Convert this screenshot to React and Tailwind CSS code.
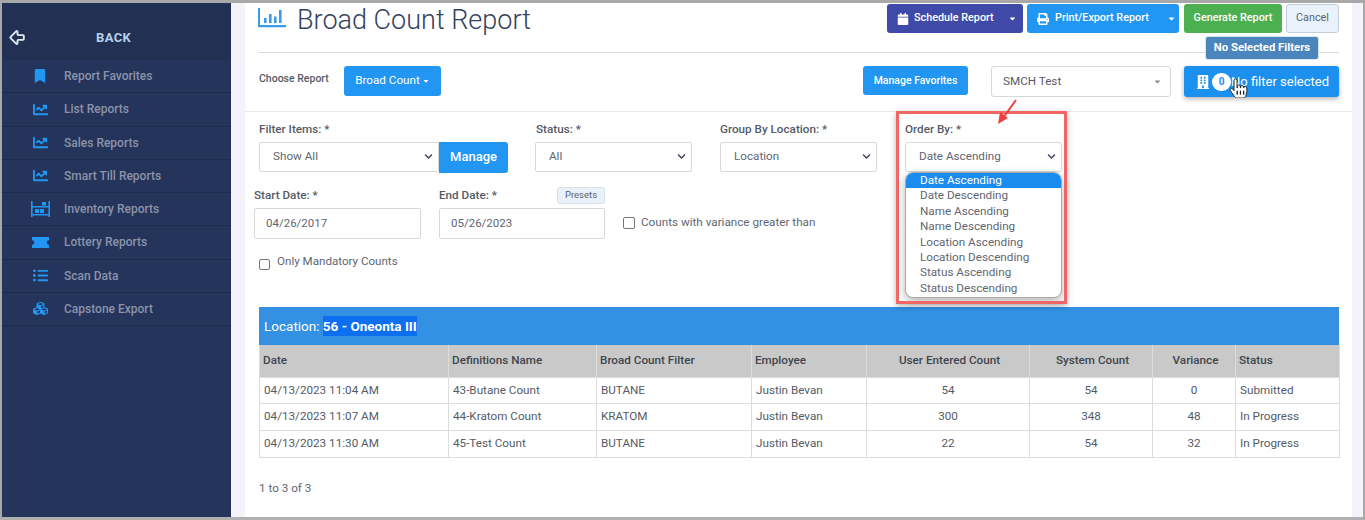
import React from "react";
import { FaBookmark, FaChartLine, FaListUl, FaCubes, FaCalendar, FaPrint, FaBuilding, FaHandPointer, FaCaretDown, FaChevronDown } from "react-icons/fa";
import { ArrowBigLeft } from "lucide-react";

const InventoryIcon = () => (
  <svg width="19" height="16" viewBox="0 0 19 16" fill="currentColor">
    <path d="M0 0h1.6v16H0zM17.4 0H19v16h-1.6zM1 13h17v1.6H1zM1 5h17v1.6H1zM4 8h4v4H4zM9 8h4v4H9zM11 1h4v3.5h-4z" />
  </svg>
);

const TicketIcon = () => (
  <svg width="17" height="11" viewBox="0 0 17 11" fill="currentColor">
    <path d="M0 0h17v3.2a2.3 2.3 0 0 0 0 4.6V11H0V7.8a2.3 2.3 0 0 0 0-4.6z" />
  </svg>
);

const TitleIcon = () => (
  <svg width="28" height="20" viewBox="0 0 28 20" fill="#3a9bea">
    <path d="M0 0h2v17h26v2.2H0zM6 10h2.6v5H6zM11 6h2.6v9H11zM16 8.500h2.600V15H16zM21 2h2.600v13H21z" />
  </svg>
);

const menu = [
  { label: "Report Favorites", icon: <FaBookmark size={14} /> },
  { label: "List Reports", icon: <FaChartLine size={15} /> },
  { label: "Sales Reports", icon: <FaChartLine size={15} /> },
  { label: "Smart Till Reports", icon: <FaChartLine size={15} /> },
  { label: "Inventory Reports", icon: <InventoryIcon /> },
  { label: "Lottery Reports", icon: <TicketIcon /> },
  { label: "Scan Data", icon: <FaListUl size={15} /> },
  { label: "Capstone Export", icon: <FaCubes size={15} /> },
];

const orderOptions = ["Date Ascending", "Date Descending", "Name Ascending", "Name Descending", "Location Ascending", "Location Descending", "Status Ascending", "Status Descending"];

const rows = [
  ["04/13/2023 11:04 AM", "43-Butane Count", "BUTANE", "Justin Bevan", "54", "54", "0", "Submitted"],
  ["04/13/2023 11:07 AM", "44-Kratom Count", "KRATOM", "Justin Bevan", "300", "348", "48", "In Progress"],
  ["04/13/2023 11:30 AM", "45-Test Count", "BUTANE", "Justin Bevan", "22", "54", "32", "In Progress"],
];

const heads = ["Date", "Definitions Name", "Broad Count Filter", "Employee", "User Entered Count", "System Count", "Variance", "Status"];

const Sidebar = () => (
  <aside className="w-[229px] shrink-0 bg-[#25345a]">
    <div className="h-[14px] bg-[#223054]" />
    <div className="flex h-[43px] items-center bg-[#223054] pb-[2px] pl-[6px]">
      <ArrowBigLeft size={19} className="text-[#dfe7f2]" strokeWidth={2.4} />
      <span className="ml-[69px] text-[13px] font-bold tracking-[0.4px] text-[#b5d0ec]">BACK</span>
    </div>
    {menu.map((item) => (
      <div key={item.label} className="flex h-[33.25px] items-center border-b border-[#1d2b4d]">
        <div className="flex w-[62px] justify-end pr-[14px] text-[#2196f3]">
          <span className="flex w-[20px] justify-center">{item.icon}</span>
        </div>
        <span className="text-[12px] font-medium text-[#8a93ab]">{item.label}</span>
      </div>
    ))}
  </aside>
);

const Select = ({ value, className }) => (
  <div className={"flex h-[30px] items-center justify-between rounded-[2px] border border-[#d8d8d8] bg-white pl-[13px] pr-[5px] text-[11.700px] text-[#5f6672] " + className}>
    <span>{value}</span>
    <FaChevronDown size={9} className="text-[#3c4658]" />
  </div>
);

const Label = ({ children, className }) => (
  <div className={"text-[11.700px] font-medium text-[#555b66] " + className}>{children}</div>
);

const TopButtons = () => (
  <div className="flex gap-[4px] pt-px text-[10.800px] font-medium text-white">
    <div className="flex h-[29px] w-[136px] items-center rounded-[3px] bg-[#3f49a8] pl-[10px]">
      <FaCalendar size={12} />
      <span className="ml-[5px]">Schedule Report</span>
      <FaCaretDown size={9} className="ml-[14px]" />
    </div>
    <div className="flex h-[29px] w-[152px] items-center rounded-[3px] bg-[#2196f3] pl-[10px]">
      <FaPrint size={12} />
      <span className="ml-[6px]">Print/Export Report</span>
      <FaCaretDown size={9} className="ml-[18px]" />
    </div>
    <div className="ml-[1px] flex h-[29px] w-[98px] items-center justify-center rounded-[3px] bg-[#4caf50]">Generate Report</div>
    <div className="flex h-[29px] w-[53px] items-center justify-center rounded-[3px] border border-[#c5ced8] bg-[#e9f2fa] font-normal text-[#5a6470]">Cancel</div>
  </div>
);

const ChooseRow = () => (
  <div className="flex h-[59px] items-start border-b border-[#e8e8ee] pl-[14px] pr-[13px] pt-[13px]">
    <span className="mt-[5px] w-[85px] text-[10.500px] font-medium text-[#555b66]">Choose Report</span>
    <div className="flex h-[30px] w-[97px] items-center justify-center gap-[2px] rounded-[3px] bg-[#2196f3] text-[11.700px] text-white">
      Broad Count
      <FaCaretDown size={8} />
    </div>
    <div className="ml-[422px] flex h-[29px] w-[105px] items-center justify-center rounded-[3px] bg-[#2196f3] text-[10.500px] font-medium text-white">Manage Favorites</div>
    <div className="ml-[23px] flex h-[31px] w-[180px] items-center justify-between rounded-[3px] border border-[#d8d8d8] pl-[11px] pr-[8px] text-[11.700px] text-[#555b66]">
      SMCH Test
      <FaCaretDown size={9} className="text-[#888]" />
    </div>
    <div className="relative ml-[13px] flex h-[31px] w-[155px] items-center rounded-[3px] bg-[#1b90ee] pl-[12px] text-[13px] text-white shadow-[0_2px_5px_rgba(0,0,0,0.3)]">
      <FaBuilding size={14} />
      <span className="ml-[2px] flex h-[18px] w-[19px] items-center justify-center rounded-full bg-white text-[10px] font-bold text-[#1b90ee]">0</span>
      <span>No filter selected</span>
      <FaHandPointer size={19} stroke="#111" strokeWidth={22} className="absolute left-[45px] top-[13px] text-white" />
      <div className="absolute -top-[29px] left-[22px] flex h-[22px] w-[112px] items-center justify-center rounded-[2px] bg-[#4a86bd] text-[11.300px] font-bold text-white shadow-[0_0_0_1px_#d8e4ee]">No Selected Filters</div>
    </div>
  </div>
);

const Filters = () => (
  <div className="relative h-[195px] pt-[9px]">
    <div className="flex pl-[14px]">
      <div className="w-[276px]">
        <Label>Filter Items: *</Label>
        <div className="mt-[3px] flex">
          <Select value="Show All" className="w-[180px]" />
          <div className="flex h-[31px] w-[69px] items-center justify-center rounded-r-[3px] bg-[#2196f3] text-[13px] font-medium text-white">Manage</div>
        </div>
      </div>
      <div className="ml-[1px] w-[184px]">
        <Label>Status: *</Label>
        <Select value="All" className="mt-[3px] -ml-px w-[157px]" />
      </div>
      <div className="w-[185px]">
        <Label>Group By Location: *</Label>
        <Select value="Location" className="mt-[3px] w-[157px]" />
      </div>
      <div className="relative w-[157px]">
        <Label>Order By: *</Label>
        <Select value="Date Ascending" className="mt-[3px] w-[157px] rounded-[3px] border-[#58a6e8]" />
        <div className="absolute left-0 top-[51px] w-[157px] overflow-hidden rounded-[8px] border border-[#a9a9a9] bg-white pb-[1px] text-[11.700px] leading-[15.400px] text-[#5f6672] shadow-[0_3px_8px_rgba(0,0,0,0.3)]">
          {orderOptions.map((opt, i) => (
            <div key={opt} className={i === 0 ? "bg-[#1a8cf0] pl-[14px] text-white" : "pl-[14px]"}>{opt}</div>
          ))}
        </div>
      </div>
    </div>
    <div className="mt-[14px] flex pl-[9px]">
      <div className="w-[185px]">
        <Label>Start Date: *</Label>
        <div className="mt-[4px] flex h-[31px] w-[167px] items-center rounded-[2px] border border-[#d8d8d8] pl-[11px] text-[11.500px] text-[#5f6672]">04/26/2017</div>
      </div>
      <div className="relative w-[184px]">
        <Label>End Date: *</Label>
        <div className="absolute left-[118px] top-0 flex h-[17px] w-[48px] items-center justify-center rounded-[3px] border border-[#d5e0ea] bg-[#e9f2fa] text-[9.500px] text-[#5a6470]">Presets</div>
        <div className="mt-[4px] flex h-[31px] w-[166px] items-center rounded-[2px] border border-[#d8d8d8] pl-[11px] text-[11.500px] text-[#5f6672]">05/26/2023</div>
      </div>
      <label className="mt-[30px] flex h-[12px] items-center text-[11.700px] text-[#5f6672]">
        <span className="h-[12px] w-[12px] rounded-[2px] border border-[#767676] bg-white" />
        <span className="ml-[6px]">Counts with variance greater than</span>
      </label>
    </div>
    <label className="mt-[16px] flex items-center pl-[14px] text-[11.600px] text-[#5f6672]">
      <span className="mt-[3px] h-[11px] w-[11px] rounded-[2px] border border-[#767676] bg-white" />
      <span className="ml-[7px] -mt-[2px]">Only Mandatory Counts</span>
    </label>
  </div>
);

const ReportTable = () => (
  <div className="pl-[14px] pr-[13px]">
    <div className="flex h-[38px] items-center bg-[#3390e2] pl-[5px] text-[13.500px] text-white">
      Location:&nbsp;<span className="bg-[#0b6ff0] font-bold">56 - Oneonta III</span>
    </div>
    <table className="w-[1080px] table-fixed border-collapse text-[11.700px] text-[#555b66]">
      <colgroup>
        <col className="w-[189px]" />
        <col className="w-[148px]" />
        <col className="w-[155px]" />
        <col className="w-[115px]" />
        <col className="w-[163px]" />
        <col className="w-[123px]" />
        <col className="w-[83px]" />
        <col className="w-[104px]" />
      </colgroup>
      <thead>
        <tr className="h-[32px] bg-[#c9c9c9] text-[#40454d]">
          {heads.map((h, i) => (
            <th key={h} className={(i >= 4 && i <= 6 ? "text-center" : "text-left") + " border-x border-[#dcdcdc] pl-[3px] font-medium"}>{h}</th>
          ))}
        </tr>
      </thead>
      <tbody>
        {rows.map((r) => (
          <tr key={r[0]} className="h-[26.700px]">
            {r.map((c, i) => (
              <td key={i} className={(i >= 4 && i <= 6 ? "text-center" : "text-left pl-[4px]") + " border border-[#dcdcdc]"}>{c}</td>
            ))}
          </tr>
        ))}
      </tbody>
    </table>
    <div className="mt-[22px] text-[11.700px] text-[#5f6672]">1 to 3 of 3</div>
  </div>
);

const Callout = () => (
  <>
    <div className="pointer-events-none absolute left-[651px] top-[108px] h-[193px] w-[171px] border-[3px] border-[#f26666] shadow-[0_2px_6px_rgba(0,0,0,0.3)]" />
    <svg className="absolute left-[750px] top-[96px]" width="24" height="28" viewBox="0 0 24 28">
      <path d="M21 1 8 19" stroke="#f0403c" strokeWidth="2" />
      <path d="M3 25l2-12 8 6z" fill="#f0403c" />
    </svg>
  </>
);

const App = () => (
  <div className="flex h-[520px] w-[1365px] overflow-hidden border-x-[2px] border-b-[3px] border-t-[3px] border-x-[#a8a8a8] border-b-[#b0b0b0] border-t-[#a8a8a8] bg-[#f3f3f9] font-['Roboto',sans-serif]">
    <Sidebar />
    <main className="relative ml-[14px] w-[1107px] bg-white">
      <div className="mx-[13px] flex h-[50px] justify-between border-b border-[#dcdcdc]">
        <div className="flex items-start">
          <span className="mt-[5px]"><TitleIcon /></span>
          <h1 className="ml-[11px] pt-px text-[27px] font-light leading-[32px] text-[#33425f]">Broad Count Report</h1>
        </div>
        <TopButtons />
      </div>
      <ChooseRow />
      <Filters />
      <ReportTable />
      <Callout />
    </main>
  </div>
);

export default App;
